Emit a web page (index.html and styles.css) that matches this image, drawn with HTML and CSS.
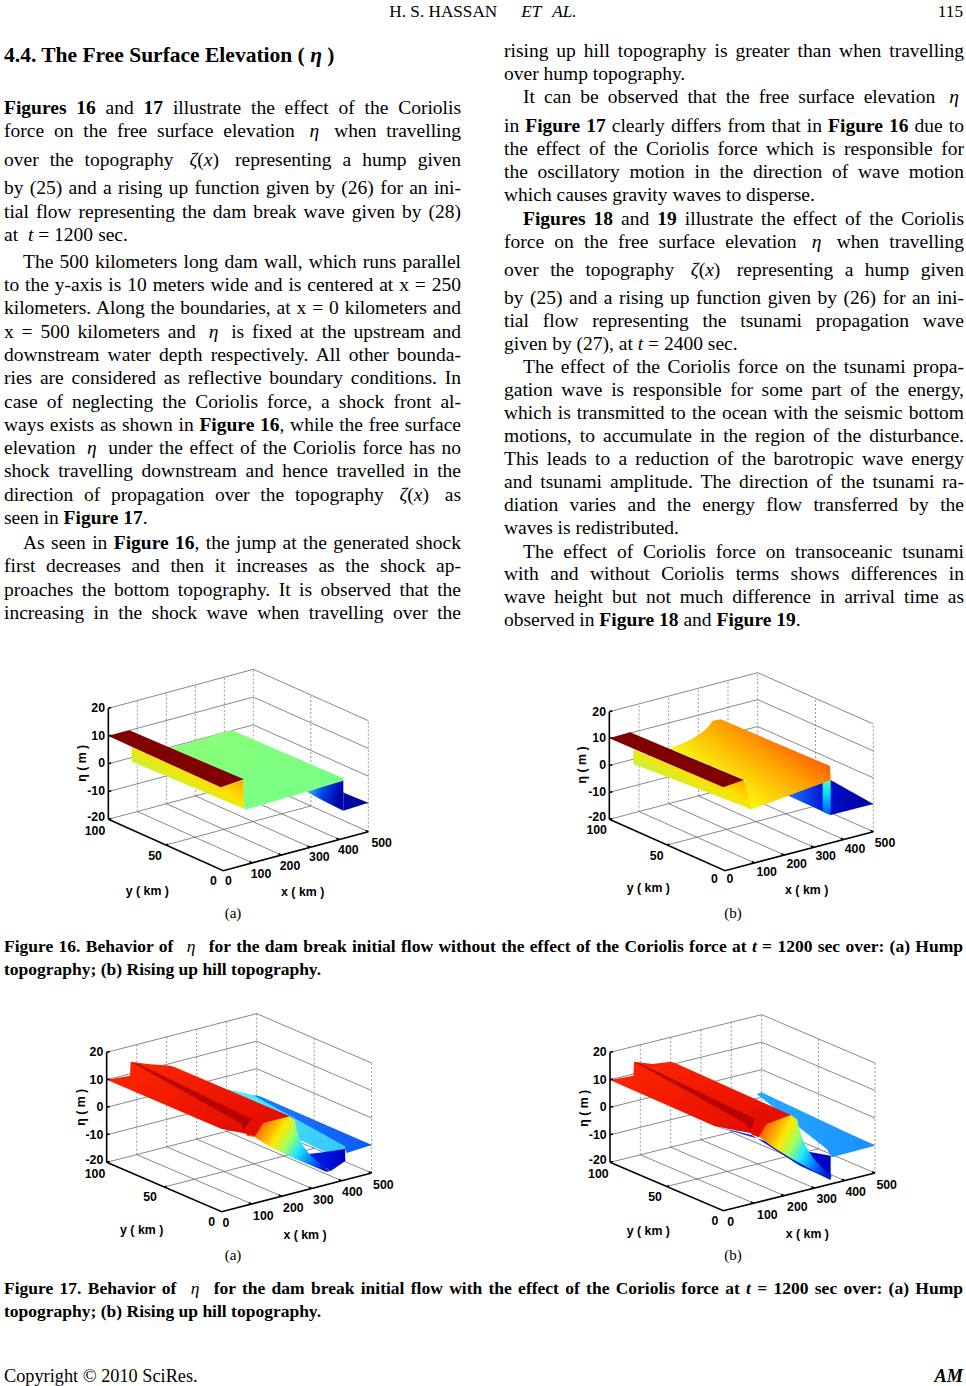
FILE: index.html
```html
<!DOCTYPE html>
<html lang="en">
<head>
<meta charset="utf-8">
<title>H. S. Hassan et al. 115</title>
<link rel="stylesheet" href="styles.css">
</head>
<body>
<div class="page">
  <header class="running-head">
    <span></span>
    <span class="authors">H. S. HASSAN<i class="etal">ET</i><i class="etal2">AL.</i></span>
    <span class="pno">115</span>
  </header>

  <div class="columns">
    <div class="col col-left">
      <h2 class="sec">4.4. The Free Surface Elevation ( <i>η</i> )</h2>
      <p class="para">
        <span class="ln"><b>Figures 16</b> and <b>17</b> illustrate the effect of the Coriolis</span>
        <span class="ln">force on the free surface elevation <i class="m">η</i> when travelling</span>
        <span class="ln tall">over the topography <span class="m"><i>ζ</i>(<i>x</i>)</span> representing a hump given</span>
        <span class="ln">by (25) and a rising up function given by (26) for an ini-</span>
        <span class="ln">tial flow representing the dam break wave given by (28)</span>
        <span class="ln last">at <span class="m"><i>t</i> = 1200</span>sec.</span>
      </p>
      <p class="para p2">
        <span class="ln ind">The 500 kilometers long dam wall, which runs parallel</span>
        <span class="ln">to the y-axis is 10 meters wide and is centered at x = 250</span>
        <span class="ln">kilometers. Along the boundaries, at x = 0 kilometers and</span>
        <span class="ln">x = 500 kilometers and <i class="m">η</i> is fixed at the upstream and</span>
        <span class="ln">downstream water depth respectively. All other bounda-</span>
        <span class="ln">ries are considered as reflective boundary conditions. In</span>
        <span class="ln">case of neglecting the Coriolis force, a shock front al-</span>
        <span class="ln">ways exists as shown in <b>Figure 16</b>, while the free surface</span>
        <span class="ln">elevation <i class="m">η</i> under the effect of the Coriolis force has no</span>
        <span class="ln">shock travelling downstream and hence travelled in the</span>
        <span class="ln">direction of propagation over the topography <span class="m"><i>ζ</i>(<i>x</i>)</span> as</span>
        <span class="ln last">seen in <b>Figure 17</b>.</span>
      </p>
      <p class="para p3">
        <span class="ln ind">As seen in <b>Figure 16</b>, the jump at the generated shock</span>
        <span class="ln">first decreases and then it increases as the shock ap-</span>
        <span class="ln">proaches the bottom topography. It is observed that the</span>
        <span class="ln">increasing in the shock wave when travelling over the</span>
      </p>
    </div>

    <div class="col col-right">
      <p class="para">
        <span class="ln">rising up hill topography is greater than when travelling</span>
        <span class="ln last">over hump topography.</span>
      </p>
      <p class="para">
        <span class="ln ind low">It can be observed that the free surface elevation <i class="m">η</i></span>
        <span class="ln">in <b>Figure 17</b> clearly differs from that in <b>Figure 16</b> due to</span>
        <span class="ln">the effect of the Coriolis force which is responsible for</span>
        <span class="ln">the oscillatory motion in the direction of wave motion</span>
        <span class="ln last">which causes gravity waves to disperse.</span>
      </p>
      <p class="para pg">
        <span class="ln ind"><b>Figures 18</b> and <b>19</b> illustrate the effect of the Coriolis</span>
        <span class="ln">force on the free surface elevation <i class="m">η</i> when travelling</span>
        <span class="ln tall">over the topography <span class="m"><i>ζ</i>(<i>x</i>)</span> representing a hump given</span>
        <span class="ln">by (25) and a rising up function given by (26) for an ini-</span>
        <span class="ln">tial flow representing the tsunami propagation wave</span>
        <span class="ln last">given by (27), at <i>t</i> = 2400 sec.</span>
      </p>
      <p class="para">
        <span class="ln ind">The effect of the Coriolis force on the tsunami propa-</span>
        <span class="ln">gation wave is responsible for some part of the energy,</span>
        <span class="ln">which is transmitted to the ocean with the seismic bottom</span>
        <span class="ln">motions, to accumulate in the region of the disturbance.</span>
        <span class="ln">This leads to a reduction of the barotropic wave energy</span>
        <span class="ln">and tsunami amplitude. The direction of the tsunami ra-</span>
        <span class="ln">diation varies and the energy flow transferred by the</span>
        <span class="ln last">waves is redistributed.</span>
      </p>
      <p class="para pg">
        <span class="ln ind">The effect of Coriolis force on transoceanic tsunami</span>
        <span class="ln">with and without Coriolis terms shows differences in</span>
        <span class="ln">wave height but not much difference in arrival time as</span>
        <span class="ln last">observed in <b>Figure 18</b> and <b>Figure 19</b>.</span>
      </p>
    </div>
  </div>

  <!-- Figure 16 -->
  <div class="figrow fr16">
    <div class="fig">
      <svg class="plot" viewBox="-21 -54 1080 720" aria-label="Figure 16a">
        <defs>
          <linearGradient id="a16b1" x1="0" y1="0" x2="1" y2="0.3">
            <stop offset="0" stop-color="#50d8ff"/><stop offset="0.5" stop-color="#0048e8"/><stop offset="1" stop-color="#0000a8"/>
          </linearGradient>
          <linearGradient id="a16g" x1="0" y1="0" x2="1" y2="1">
            <stop offset="0" stop-color="#8cff74"/><stop offset="1" stop-color="#72ff8c"/>
          </linearGradient>
          <linearGradient id="a16s" x1="1" y1="0" x2="0" y2="1">
            <stop offset="0" stop-color="#ff2000"/><stop offset="0.2" stop-color="#ff9000"/><stop offset="0.45" stop-color="#ffe000"/><stop offset="0.75" stop-color="#a0ff60"/><stop offset="1" stop-color="#70ff90"/>
          </linearGradient>
        </defs>
        <g transform="matrix(87,-23.4,0,-83.25,145,418)">
          <path class="gh" d="M0 1H5M0 2H5M0 3H5M0 4H5"/>
          <path class="gv" d="M1 0V4M2 0V4M3 0V4M4 0V4M5 0V4"/>
        </g>
        <g transform="matrix(-172.5,-77,0,-83.25,925,455)">
          <path class="gh" d="M0 1H2M0 2H2M0 3H2M0 4H2"/>
          <path class="gv" d="M0 0V4M1 0V4"/>
        </g>
        <g transform="matrix(87,-23.4,-172.5,-77,490,572)">
          <path class="gh" d="M0 1H5M0 2H5M1 0V2M2 0V2M3 0V2M4 0V2M5 0V2"/>
        </g>
        <polygon points="740,335 850,299 850,392 790,362" fill="url(#a16b1)"/>
        <polygon points="850,338 925,368 850,392" fill="#0008a0"/>
        <polygon points="330,205 515,150 850,295 850,302 560,388 550,385 550,300" fill="url(#a16g)"/>
        <polygon points="215,200 480,322 550,300 552,386 215,245" fill="url(#a16s)"/>
        <polygon points="145,168 208,151 552,298 482,322" fill="#800000"/>
        <g transform="matrix(87,-23.4,-172.5,-77,490,572)">
          <path class="ax" d="M0 2V0H5M1 0V0.05M2 0V0.05M3 0V0.05M4 0V0.05M5 0V0.05M0 1H0.08M0 2H0.08"/>
        </g>
        <g transform="matrix(87,-23.4,0,-83.25,145,418)">
          <path class="ax" d="M0 0V4M0 0H0.1M0 1H0.1M0 2H0.1M0 3H0.1M0 4H0.1"/>
        </g>
        <text class="tk ze" x="135" y="85">20</text>
        <text class="tk ze" x="135" y="168">10</text>
        <text class="tk ze" x="135" y="250">0</text>
        <text class="tk ze" x="135" y="333">-10</text>
        <text class="tk ze" x="135" y="412">-20</text>
        <text class="tk" x="105" y="452">100</text>
        <text class="tk" x="285" y="527">50</text>
        <text class="tk" x="460" y="602">0</text>
        <text class="tk" x="505" y="602">0</text>
        <text class="tk" x="603" y="582">100</text>
        <text class="tk" x="690" y="557">200</text>
        <text class="tk" x="778" y="532">300</text>
        <text class="tk" x="865" y="510">400</text>
        <text class="tk" x="965" y="488">500</text>
        <text class="tk" x="262" y="632">y ( km )</text>
        <text class="tk" x="728" y="637">x ( km )</text>
        <text class="tk" transform="translate(65,250) rotate(-90)">η ( m )</text>
      </svg>
      <div class="sub">(a)</div>
    </div>
    <div class="fig">
      <svg class="plot" viewBox="-21 -54 1080 720" aria-label="Figure 16b">
        <defs>
          <linearGradient id="b16d" x1="0" y1="0" x2="1" y2="0">
            <stop offset="0" stop-color="#1e78ff"/><stop offset="0.45" stop-color="#0010d0"/><stop offset="1" stop-color="#00009a"/>
          </linearGradient>
          <linearGradient id="b16c" x1="0" y1="0" x2="0" y2="1">
            <stop offset="0" stop-color="#60ffa0"/><stop offset="0.4" stop-color="#00e0ff"/><stop offset="1" stop-color="#0050ff"/>
          </linearGradient>
          <linearGradient id="b16m" x1="0" y1="1" x2="1" y2="0.2">
            <stop offset="0" stop-color="#a8ff58"/><stop offset="0.3" stop-color="#f8ff10"/><stop offset="0.65" stop-color="#ffa000"/><stop offset="1" stop-color="#ff3000"/>
          </linearGradient>
          <linearGradient id="b16s" x1="1" y1="0" x2="0" y2="1">
            <stop offset="0" stop-color="#ff2000"/><stop offset="0.2" stop-color="#ff9000"/><stop offset="0.45" stop-color="#ffe000"/><stop offset="0.75" stop-color="#a0ff60"/><stop offset="1" stop-color="#70ff90"/>
          </linearGradient>
        </defs>
        <g transform="matrix(89,-23.4,0,-80.75,148,418)">
          <path class="gh" d="M0 1H5M0 2H5M0 3H5M0 4H5"/>
          <path class="gv" d="M1 0V4M2 0V4M3 0V4M4 0V4M5 0V4"/>
        </g>
        <g transform="matrix(-173.5,-77,0,-80.75,940,455)">
          <path class="gh" d="M0 1H2M0 2H2M0 3H2M0 4H2"/>
          <path class="gv" d="M0 0V4M1 0V4"/>
        </g>
        <g transform="matrix(89,-23.4,-173.5,-77,495,572)">
          <path class="gh" d="M0 1H5M0 2H5M1 0V2M2 0V2M3 0V2M4 0V2M5 0V2"/>
        </g>
        <polygon points="680,345 812,300 940,372 812,405" fill="url(#b16d)"/>
        <polygon points="788,298 812,298 812,405 788,395" fill="url(#b16c)"/>
        <path d="M330,205 Q430,170 458,122 L482,118 L810,258 L812,300 L575,388 L558,386 L555,300 Z" fill="url(#b16m)"/>
        <polygon points="220,208 490,322 552,300 575,388 220,252" fill="url(#b16s)"/>
        <polygon points="148,175 210,157 552,300 490,322" fill="#800000"/>
        <g transform="matrix(89,-23.4,-173.5,-77,495,572)">
          <path class="ax" d="M0 2V0H5M1 0V0.05M2 0V0.05M3 0V0.05M4 0V0.05M5 0V0.05M0 1H0.08M0 2H0.08"/>
        </g>
        <g transform="matrix(89,-23.4,0,-80.75,148,418)">
          <path class="ax" d="M0 0V4M0 0H0.1M0 1H0.1M0 2H0.1M0 3H0.1M0 4H0.1"/>
        </g>
        <text class="tk ze" x="138" y="95">20</text>
        <text class="tk ze" x="138" y="175">10</text>
        <text class="tk ze" x="138" y="255">0</text>
        <text class="tk ze" x="138" y="335">-10</text>
        <text class="tk ze" x="138" y="410">-20</text>
        <text class="tk" x="110" y="450">100</text>
        <text class="tk" x="290" y="527">50</text>
        <text class="tk" x="463" y="598">0</text>
        <text class="tk" x="510" y="598">0</text>
        <text class="tk" x="620" y="577">100</text>
        <text class="tk" x="710" y="552">200</text>
        <text class="tk" x="797" y="528">300</text>
        <text class="tk" x="885" y="508">400</text>
        <text class="tk" x="975" y="488">500</text>
        <text class="tk" x="265" y="625">y ( km )</text>
        <text class="tk" x="740" y="630">x ( km )</text>
        <text class="tk" transform="translate(65,255) rotate(-90)">η ( m )</text>
      </svg>
      <div class="sub">(b)</div>
    </div>
  </div>
  <p class="cap">
    <span class="ln">Figure 16. Behavior of <i class="m cm">η</i> for the dam break initial flow without the effect of the Coriolis force at <i>t</i> = 1200 sec over: (a) Hump</span>
    <span class="ln last">topography; (b) Rising up hill topography.</span>
  </p>

  <!-- Figure 17 -->
  <div class="figrow fr17">
    <div class="fig">
      <svg class="plot" viewBox="-21 -15 1080 720" aria-label="Figure 17a">
        <defs>
          <linearGradient id="a17b" x1="0" y1="0" x2="1" y2="0">
            <stop offset="0" stop-color="#1e80ff"/><stop offset="1" stop-color="#0a5af5"/>
          </linearGradient>
          <linearGradient id="a17c" x1="0" y1="0" x2="1" y2="1">
            <stop offset="0" stop-color="#58ecff"/><stop offset="1" stop-color="#30c4ff"/>
          </linearGradient>
          <linearGradient id="a17d" x1="0" y1="0" x2="1" y2="0">
            <stop offset="0" stop-color="#0030ff"/><stop offset="1" stop-color="#0000c8"/>
          </linearGradient>
          <linearGradient id="a17w" x1="0" y1="0.3" x2="1" y2="0.7">
            <stop offset="0" stop-color="#ff3000"/><stop offset="0.2" stop-color="#ff9a00"/><stop offset="0.35" stop-color="#ffe800"/><stop offset="0.5" stop-color="#a0ff60"/><stop offset="0.65" stop-color="#20e8ff"/><stop offset="0.85" stop-color="#0070ff"/><stop offset="1" stop-color="#0020d0"/>
          </linearGradient>
          <linearGradient id="a17r" x1="0" y1="0" x2="1" y2="1">
            <stop offset="0" stop-color="#ff2800"/><stop offset="1" stop-color="#e00800"/>
          </linearGradient>
        </defs>
        <g transform="matrix(90,-23.2,0,-82.5,140,460)">
          <path class="gh" d="M0 1H5M0 2H5M0 3H5M0 4H5"/>
          <path class="gv" d="M1 0V4M2 0V4M3 0V4M4 0V4M5 0V4"/>
        </g>
        <g transform="matrix(-172.5,-74,0,-82.5,935,492)">
          <path class="gh" d="M0 1H2M0 2H2M0 3H2M0 4H2"/>
          <path class="gv" d="M0 0V4M1 0V4"/>
        </g>
        <g transform="matrix(90,-23.2,-172.5,-74,485,608)">
          <path class="gh" d="M0 1H5M0 2H5M1 0V2M2 0V2M3 0V2M4 0V2M5 0V2"/>
        </g>
        <polygon points="575,258 600,262 935,408 860,432 852,412" fill="url(#a17b)"/>
        <polygon points="500,240 578,258 855,412 855,455 820,440 650,360" fill="url(#a17c)"/>
        <polygon points="700,440 800,478 812,486 856,456 855,420 790,430" fill="url(#a17d)"/>
        <path d="M555,345 L680,318 L705,335 C715,400 740,440 812,486 L798,488 C720,455 640,425 585,385 L560,380 Z" fill="url(#a17w)"/>
        <polygon points="140,212 210,200 212,158 262,165 330,170 345,175 690,322 610,342 585,382 548,372 485,360" fill="url(#a17r)"/>
        <polygon points="212,158 238,166 575,330 550,365 545,345" fill="#a50000" opacity="0.75"/>
        <g transform="matrix(90,-23.2,-172.5,-74,485,608)">
          <path class="ax" d="M0 2V0H5M1 0V0.05M2 0V0.05M3 0V0.05M4 0V0.05M5 0V0.05M0 1H0.08M0 2H0.08"/>
        </g>
        <g transform="matrix(90,-23.2,0,-82.5,140,460)">
          <path class="ax" d="M0 0V4M0 0H0.1M0 1H0.1M0 2H0.1M0 3H0.1M0 4H0.1"/>
        </g>
        <text class="tk ze" x="130" y="130">20</text>
        <text class="tk ze" x="130" y="212">10</text>
        <text class="tk ze" x="130" y="295">0</text>
        <text class="tk ze" x="130" y="377">-10</text>
        <text class="tk ze" x="130" y="453">-20</text>
        <text class="tk" x="105" y="495">100</text>
        <text class="tk" x="270" y="565">50</text>
        <text class="tk" x="455" y="640">0</text>
        <text class="tk" x="498" y="642">0</text>
        <text class="tk" x="610" y="620">100</text>
        <text class="tk" x="700" y="598">200</text>
        <text class="tk" x="790" y="573">300</text>
        <text class="tk" x="877" y="548">400</text>
        <text class="tk" x="970" y="528">500</text>
        <text class="tk" x="245" y="662">y ( km )</text>
        <text class="tk" x="735" y="677">x ( km )</text>
        <text class="tk" transform="translate(62,295) rotate(-90)">η ( m )</text>
      </svg>
      <div class="sub">(a)</div>
    </div>
    <div class="fig">
      <svg class="plot" viewBox="-21 -15 1080 720" aria-label="Figure 17b">
        <defs>
          <linearGradient id="b17l" x1="0" y1="0" x2="1" y2="0">
            <stop offset="0" stop-color="#28aaff"/><stop offset="1" stop-color="#1890ff"/>
          </linearGradient>
          <linearGradient id="b17d" x1="0" y1="0" x2="1" y2="0">
            <stop offset="0" stop-color="#0040ff"/><stop offset="1" stop-color="#0000c0"/>
          </linearGradient>
          <linearGradient id="b17w" x1="0" y1="0.3" x2="1" y2="0.7">
            <stop offset="0" stop-color="#ff3000"/><stop offset="0.2" stop-color="#ff9a00"/><stop offset="0.35" stop-color="#ffe800"/><stop offset="0.5" stop-color="#a0ff60"/><stop offset="0.65" stop-color="#20e8ff"/><stop offset="0.85" stop-color="#0070ff"/><stop offset="1" stop-color="#0020d0"/>
          </linearGradient>
          <linearGradient id="b17r" x1="0" y1="0" x2="1" y2="1">
            <stop offset="0" stop-color="#ff2800"/><stop offset="1" stop-color="#e00800"/>
          </linearGradient>
        </defs>
        <g transform="matrix(91,-22.6,0,-82.5,150,460)">
          <path class="gh" d="M0 1H5M0 2H5M0 3H5M0 4H5"/>
          <path class="gv" d="M1 0V4M2 0V4M3 0V4M4 0V4M5 0V4"/>
        </g>
        <g transform="matrix(-170,-72.5,0,-82.5,945,492)">
          <path class="gh" d="M0 1H2M0 2H2M0 3H2M0 4H2"/>
          <path class="gv" d="M0 0V4M1 0V4"/>
        </g>
        <g transform="matrix(91,-22.6,-170,-72.5,490,605)">
          <path class="gh" d="M0 1H5M0 2H5M1 0V2M2 0V2M3 0V2M4 0V2M5 0V2"/>
        </g>
        <polygon points="590,255 605,250 945,410 815,445 800,420" fill="url(#b17l)"/>
        <polygon points="465,352 575,378 720,470 812,512 812,440 700,420" fill="url(#b17d)"/>
        <path d="M578,345 L692,318 L712,332 C725,400 750,450 815,500 L810,512 C730,470 650,425 600,385 L575,378 Z" fill="url(#b17w)"/>
        <polygon points="150,213 220,200 222,158 278,165 332,158 345,162 692,318 620,345 595,385 570,372 465,352" fill="url(#b17r)"/>
        <polygon points="222,158 246,166 585,330 570,368 560,345" fill="#a50000" opacity="0.75"/>
        <g transform="matrix(91,-22.6,-170,-72.5,490,605)">
          <path class="ax" d="M0 2V0H5M1 0V0.05M2 0V0.05M3 0V0.05M4 0V0.05M5 0V0.05M0 1H0.08M0 2H0.08"/>
        </g>
        <g transform="matrix(91,-22.6,0,-82.5,150,460)">
          <path class="ax" d="M0 0V4M0 0H0.1M0 1H0.1M0 2H0.1M0 3H0.1M0 4H0.1"/>
        </g>
        <text class="tk ze" x="140" y="130">20</text>
        <text class="tk ze" x="140" y="213">10</text>
        <text class="tk ze" x="140" y="295">0</text>
        <text class="tk ze" x="140" y="377">-10</text>
        <text class="tk ze" x="140" y="453">-20</text>
        <text class="tk" x="115" y="494">100</text>
        <text class="tk" x="285" y="563">50</text>
        <text class="tk" x="465" y="635">0</text>
        <text class="tk" x="512" y="638">0</text>
        <text class="tk" x="622" y="618">100</text>
        <text class="tk" x="712" y="595">200</text>
        <text class="tk" x="800" y="570">300</text>
        <text class="tk" x="887" y="548">400</text>
        <text class="tk" x="980" y="528">500</text>
        <text class="tk" x="265" y="665">y ( km )</text>
        <text class="tk" x="742" y="675">x ( km )</text>
        <text class="tk" transform="translate(72,298) rotate(-90)">η ( m )</text>
      </svg>
      <div class="sub">(b)</div>
    </div>
  </div>
  <p class="cap">
    <span class="ln">Figure 17. Behavior of <i class="m cm">η</i> for the dam break initial flow with the effect of the Coriolis force at <i>t</i> = 1200 sec over: (a) Hump</span>
    <span class="ln last">topography; (b) Rising up hill topography.</span>
  </p>

  <footer class="foot">
    <span>Copyright © 2010 SciRes.</span>
    <b><i>AM</i></b>
  </footer>
</div>
</body>
</html>
```

FILE: styles.css
```css
html, body {
  margin: 0;
  padding: 0;
  background: #ffffff;
}

body {
  color: #000000;
  font-family: "Liberation Serif", "Times New Roman", serif;
  font-size: 19.5px;
}

.page {
  width: 966px;
  height: 1386px;
  overflow: hidden;
}

/* running head */
.running-head {
  display: grid;
  grid-template-columns: 1fr auto 1fr;
  padding: 0 3px;
  font-size: 17.2px;
  line-height: 23.3px;
}
.running-head .pno {
  justify-self: end;
}
.etal {
  margin-left: 24px;
}
.etal2 {
  margin-left: 11px;
}

/* two text columns */
.columns {
  display: grid;
  grid-template-columns: 457px 460px;
  column-gap: 43px;
  padding-left: 4px;
  margin-top: 16.7px;
}

.sec {
  margin: 2px 0 28px;
  font-size: 21.5px;
  line-height: 26px;
  font-weight: bold;
}

.para {
  margin: 0;
}
.col-left .ln {
  line-height: 23.3px;
}
.col-right .ln {
  line-height: 22.95px;
}
.col-left .p2 {
  margin-top: 3.5px;
}
.col-left .p3 {
  margin-top: 1.7px;
}
.col-right .pg {
  margin-top: 1px;
}

.ln {
  display: block;
  text-align: justify;
  text-align-last: justify;
  word-spacing: -2px;
}
.ln.last {
  text-align-last: left;
  word-spacing: 0;
}
.ln.ind {
  text-indent: 19px;
}
.ln.tall {
  padding-top: 5.5px;
  padding-bottom: 5px;
}
.ln.low {
  padding-bottom: 6px;
}

.m {
  margin: 0 5px;
}

/* figures */
.figrow {
  display: grid;
  grid-template-columns: 400px 400px;
  column-gap: 100px;
  padding-left: 33px;
}
.fr16 {
  margin-top: 29.7px;
}
.fr17 {
  margin-top: 23.4px;
}
.fig {
  display: flex;
  flex-direction: column;
  align-items: center;
}
.plot {
  display: block;
  width: 360px;
  height: 240px;
}
.sub {
  margin-top: 1px;
  font-size: 15px;
  line-height: 20px;
}

.gh {
  fill: none;
  stroke: #6a6a6a;
  stroke-width: 0.8;
  vector-effect: non-scaling-stroke;
}
.gv {
  fill: none;
  stroke: #808080;
  stroke-width: 0.8;
  stroke-dasharray: 2 2;
  vector-effect: non-scaling-stroke;
}
.ax {
  fill: none;
  stroke: #000000;
  stroke-width: 1.6;
  vector-effect: non-scaling-stroke;
}
.tk {
  font-family: "Liberation Sans Narrow", "Liberation Sans", Arial, sans-serif;
  font-weight: bold;
  font-size: 37px;
  fill: #000000;
  text-anchor: middle;
  dominant-baseline: central;
}
.tk.ze {
  text-anchor: end;
}

/* captions */
.cap {
  margin: 12px 0 0;
  padding: 0 3px 0 4px;
  font-size: 17.5px;
  font-weight: bold;
}
.cap .ln {
  line-height: 23px;
}
.cap .cm {
  font-weight: normal;
  margin: 0 8px;
}

/* footer */
.foot {
  display: flex;
  justify-content: space-between;
  margin-top: 41.4px;
  padding: 0 3px 0 4px;
  font-size: 18.3px;
  line-height: 23.3px;
}
```
